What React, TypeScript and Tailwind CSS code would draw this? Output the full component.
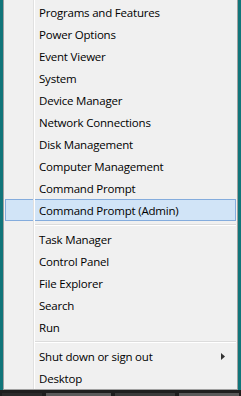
const groups: string[][] = [
  [
    "Programs and Features",
    "Power Options",
    "Event Viewer",
    "System",
    "Device Manager",
    "Network Connections",
    "Disk Management",
    "Computer Management",
    "Command Prompt",
    "Command Prompt (Admin)",
  ],
  ["Task Manager", "Control Panel", "File Explorer", "Search", "Run"],
  ["Shut down or sign out", "Desktop"],
];

function Item({ label, active, arrow }: { label: string; active?: boolean; arrow?: boolean }) {
  return (
    <div className="h-[22px] px-[1px] flex">
      <div
        className={
          "flex-1 flex items-center border " +
          (active ? "bg-[#d1e4f7] border-[#84acdd]" : "border-transparent")
        }
      >
        <span className="pl-[33px] pt-[2px] flex-1 text-[11.5px] tracking-[-0.2px] text-black leading-none">
          {label}
        </span>
        {arrow && (
          <svg width="4" height="7" viewBox="0 0 4 7" className="mr-[10px] mt-[1px]">
            <path d="M0 0 L4 3.5 L0 7 Z" fill="#333" />
          </svg>
        )}
      </div>
    </div>
  );
}

export default function App() {
  return (
    <div
      className="w-[241px] h-[396px] bg-[#11757a] flex flex-col"
      style={{ fontFamily: '"Segoe UI", "Open Sans", "Noto Sans", sans-serif' }}
    >
      <div className="h-[390px] pl-[3px] pr-[3px] flex">
        <div className="relative flex-1 bg-[#f0f0f0] border-x border-b border-[#a0a0a0] pt-[1px]">
          {/* gutter */}
          <div className="absolute left-[29px] top-0 bottom-0 w-[2px] border-l border-[#e0e0e0] border-r-white border-r" />
          {groups.map((g, gi) => (
            <div key={gi}>
              {gi > 0 && (
                <div className="h-[7px] flex items-center pl-[31px] pr-[1px]">
                  <div className="flex-1 h-[2px] border-t border-[#dcdcdc] border-b border-b-white" />
                </div>
              )}
              {g.map((l) => (
                <Item
                  key={l}
                  label={l}
                  active={l === "Command Prompt (Admin)"}
                  arrow={l === "Shut down or sign out"}
                />
              ))}
            </div>
          ))}
        </div>
      </div>
      <div className="flex-1 bg-[#1e1e1e] flex items-end gap-[4px] px-[2px]">
        <div className="w-[40px] h-[3px] bg-[#2a2a2a]" />
        <div className="w-[65px] h-[3px] bg-[#5a5a5a]" />
        <div className="w-[60px] h-[3px] bg-[#3a3a3a]" />
        <div className="w-[60px] h-[3px] bg-[#5a5a5a]" />
      </div>
    </div>
  );
}
